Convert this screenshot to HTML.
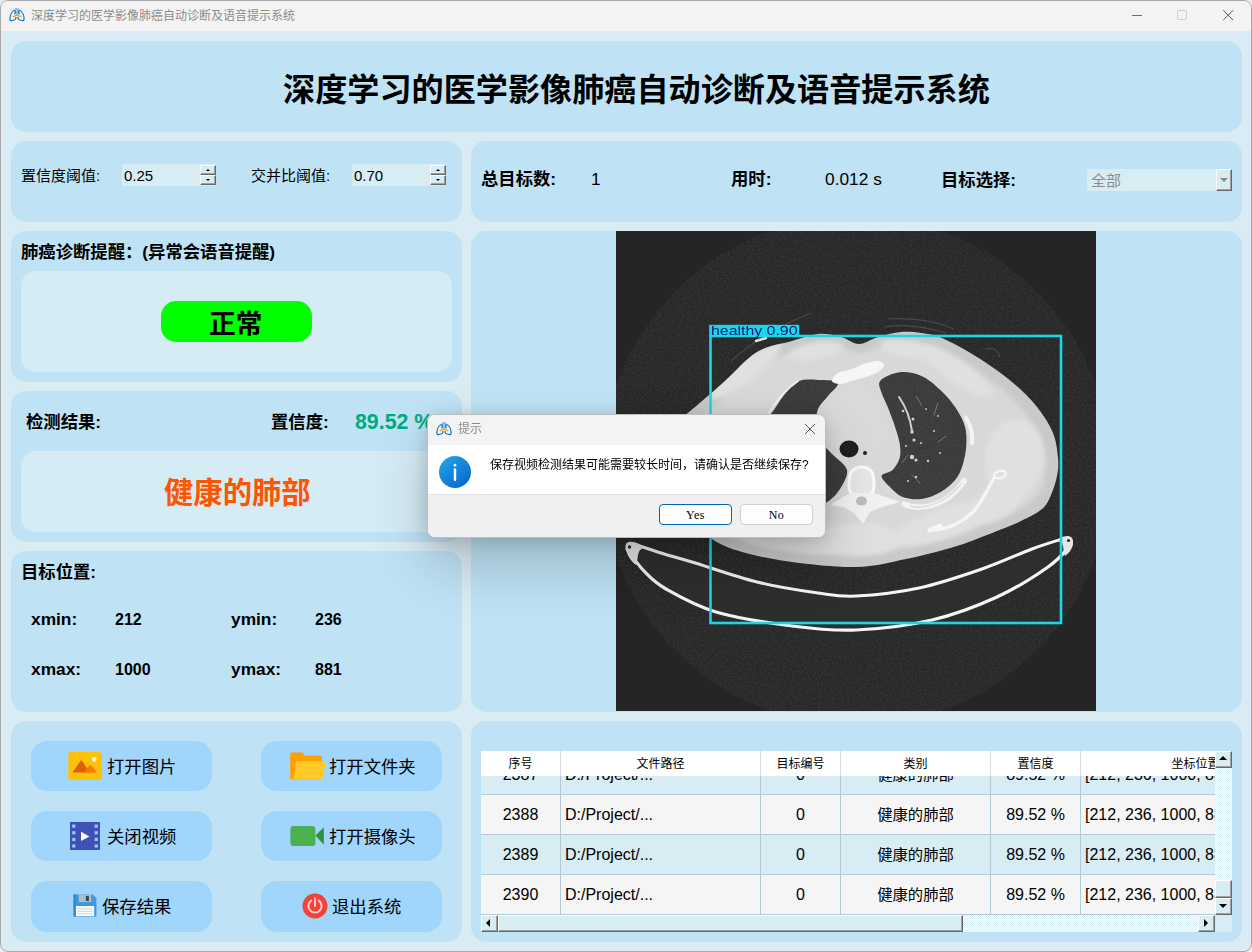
<!DOCTYPE html>
<html lang="zh-CN">
<head>
<meta charset="utf-8">
<title>深度学习的医学影像肺癌自动诊断及语音提示系统</title>
<style>
*{box-sizing:border-box;margin:0;padding:0}
html,body{width:1252px;height:952px;overflow:hidden;background:#ececec}
body{font-family:"Liberation Sans","Noto Sans CJK SC",sans-serif;color:#000;position:relative}
.abs{position:absolute}
#win{position:absolute;left:0;top:0;width:1252px;height:952px;background:#d9ecf4;border:1px solid #a9a9a9;border-radius:8px;overflow:hidden}
#tbar{position:absolute;left:0;top:0;width:1250px;height:30px;background:#f3f3f3}
#tbar .ttl{position:absolute;left:30px;top:0;height:30px;line-height:30px;font-size:12px;color:#8c8c8c;white-space:nowrap}
.panel{position:absolute;background:#bfe3f5;border-radius:15px}
.inner{position:absolute;background:#d6ecf5;border-radius:15px}
.t{position:absolute;white-space:nowrap;line-height:1}
.b{font-weight:bold}
.btn{position:absolute;background:#a0d5fc;border-radius:16px;width:181px;height:50px}
.bt{font-size:17.33px}

.spin{position:absolute;width:94px;height:22px;background:#d8ecf4}
.spin span{position:absolute;left:2px;top:4px;font-size:15px;line-height:1;white-space:nowrap}
.spin i{position:absolute;right:0;width:16px;height:10px;background:#d8ecf4;border-top:1px solid #fff;border-left:1px solid #fff;border-right:1px solid #696969;border-bottom:1px solid #696969;box-shadow:inset -1px -1px 0 #a0a0a0}
.spin i.up{top:1px}
.spin i.dn{top:11px}
.spin i:after{content:"";position:absolute;left:5px;width:0;height:0;border-left:2px solid transparent;border-right:2px solid transparent}
.spin i.up:after{top:3px;border-bottom:2px solid #000}
.spin i.dn:after{top:3px;border-top:2px solid #000}
.combo{position:absolute;width:145px;height:22px;background:#d8ecf4}
.combo span{position:absolute;left:4px;top:4px;font-size:15px;line-height:1;color:#8a8a8a;white-space:nowrap}
.combo i{position:absolute;right:0;top:0;width:16px;height:22px;background:#d8ecf4;border-top:1px solid #fff;border-left:1px solid #fff;border-right:1px solid #696969;border-bottom:1px solid #696969;box-shadow:inset -1px -1px 0 #a0a0a0}
.combo i:after{content:"";position:absolute;left:3px;top:8px;width:0;height:0;border-left:4px solid transparent;border-right:4px solid transparent;border-top:4px solid #8a8a8a}

.trow{position:absolute;left:0;width:840px;height:40px;border-bottom:1px solid #b4c9d3}
.tc.cj{font-size:15.33px}
.tc{position:absolute;top:0;height:39px;line-height:40px;font-size:16px;white-space:nowrap;overflow:hidden;border-right:1px solid #b4c9d3}
.th{position:absolute;top:0;height:25px;line-height:27px;font-size:12px;text-align:center;white-space:nowrap;border-right:1px solid #dcdcdc}
.sbtrack{background-color:#ecf6fa;background-image:repeating-conic-gradient(#fff 0% 25%, #d8ecf4 0% 50%);background-size:2px 2px}
.sbbtn{background:#d8ecf4;border-top:1px solid #fff;border-left:1px solid #fff;border-right:1px solid #696969;border-bottom:1px solid #696969;box-shadow:inset -1px -1px 0 #a0a0a0}
.sbbtn i{position:absolute;width:0;height:0}
.sbbtn i.au{left:3px;top:4px;border-left:4px solid transparent;border-right:4px solid transparent;border-bottom:4px solid #000}
.sbbtn i.ad{left:3px;top:5px;border-left:4px solid transparent;border-right:4px solid transparent;border-top:4px solid #000}
.sbbtn i.al{left:4px;top:3px;border-top:4px solid transparent;border-bottom:4px solid transparent;border-right:4px solid #000}
.sbbtn i.ar{left:5px;top:3px;border-top:4px solid transparent;border-bottom:4px solid transparent;border-left:4px solid #000}

.dbtn{position:absolute;width:73px;height:21px;border:1px solid #d0d0d0;border-radius:4px;background:#fdfdfd;font-family:"Liberation Serif","Noto Serif CJK SC",serif;font-size:12px;letter-spacing:0.5px;line-height:21px;text-align:center;color:#000}
</style>
</head>
<body>
<div id="win">
  <div id="tbar">
    <div class="ttl">深度学习的医学影像肺癌自动诊断及语音提示系统</div>
    <svg class="abs" style="left:8px;top:6.5px" width="16" height="16" viewBox="0 0 16 16">
      <g transform="scale(1,0.95)"><rect x="6.1" y="0.3" width="3.8" height="6.6" rx="0.6" fill="#6db3e3"/>
      <rect x="7.3" y="0.3" width="1.4" height="6.6" fill="#9ccbec"/>
      <path d="M5.2 2.6C3 3.4 1 7.2 0.9 11.6c0 1.6 0.9 1.9 2.2 1.6l2.6-0.8c0.9-0.3 1.2-0.8 1.2-1.8V9.8M5.2 2.6c1.1 0.5 1.5 2.2 0.5 3.3M10.8 2.6c2.2 0.8 4.2 4.6 4.3 9 0 1.6-0.9 1.9-2.2 1.6l-2.6-0.8c-0.9-0.3-1.2-0.8-1.2-1.8V9.8M10.8 2.6c-1.1 0.5-1.5 2.2-0.5 3.3" fill="none" stroke="#0b78c9" stroke-width="1.25" stroke-linecap="round" stroke-linejoin="round"/>
      <path d="M4.3 9.1C5.6 8.6 6.8 7.6 8 7.6s2.4 1 3.7 1.5" fill="none" stroke="#ff9a14" stroke-width="1.4" stroke-linecap="round"/></g>
    </svg>
    <svg class="abs" style="left:1120px;top:0" width="130" height="30" viewBox="0 0 130 30">
      <path d="M11 14.5h10" stroke="#6e6e6e" stroke-width="1" fill="none"/>
      <rect x="56.5" y="9.5" width="9" height="9" rx="1.2" fill="none" stroke="#cfcfcf" stroke-width="1"/>
      <path d="M102.2 9.2l10 10M112.2 9.2l-10 10" stroke="#5a5a5a" stroke-width="1" fill="none"/>
    </svg>
  </div>

  <!-- title panel -->
  <div class="panel" style="left:10px;top:40px;width:1231px;height:91px"></div>
  <div class="t b" id="maintitle" style="left:282px;top:72.5px;font-size:32.13px">深度学习的医学影像肺癌自动诊断及语音提示系统</div>

  <!-- threshold panel -->
  <div class="panel" style="left:10px;top:140px;width:451px;height:81px"></div>
  <!-- stats panel -->
  <div class="panel" style="left:470px;top:140px;width:771px;height:81px"></div>
  <!-- diagnosis panel -->
  <div class="panel" style="left:10px;top:230px;width:451px;height:151px"></div>
  <!-- result panel -->
  <div class="panel" style="left:10px;top:390px;width:451px;height:151px"></div>
  <!-- position panel -->
  <div class="panel" style="left:10px;top:550px;width:451px;height:161px"></div>
  <!-- buttons panel -->
  <div class="panel" style="left:10px;top:720px;width:451px;height:221px"></div>

  <!-- threshold contents -->
  <div class="t" style="left:20px;top:167px;font-size:15px">置信度阈值:</div>
  <div class="spin" style="left:121px;top:163px"><span>0.25</span><i class="up"></i><i class="dn"></i></div>
  <div class="t" style="left:250px;top:167px;font-size:15px">交并比阈值:</div>
  <div class="spin" style="left:351px;top:163px"><span>0.70</span><i class="up"></i><i class="dn"></i></div>

  <!-- stats contents -->
  <div class="t b" style="left:480px;top:170px;font-size:17.33px">总目标数:</div>
  <div class="t" style="left:590px;top:170px;font-size:17.33px">1</div>
  <div class="t b" style="left:730px;top:170px;font-size:17.33px">用时:</div>
  <div class="t" style="left:824px;top:170px;font-size:17.33px">0.012 s</div>
  <div class="t b" style="left:940px;top:171px;font-size:17.33px">目标选择:</div>
  <div class="combo" style="left:1086px;top:168px"><span>全部</span><i></i></div>

  <!-- diagnosis contents -->
  <div class="t b" style="left:20px;top:243px;font-size:17.33px">肺癌诊断提醒：(异常会语音提醒)</div>
  <div class="inner" style="left:20px;top:270px;width:431px;height:101px"></div>
  <div class="abs" style="left:160px;top:300px;width:151px;height:41px;background:#00ff00;border-radius:15px"></div>
  <div class="t b" style="left:208px;top:310px;font-size:26.67px">正常</div>

  <!-- result contents -->
  <div class="t b" style="left:25px;top:413px;font-size:17.33px">检测结果:</div>
  <div class="t b" style="left:270px;top:413px;font-size:17.33px">置信度:</div>
  <div class="t b" style="left:354px;top:411px;font-size:21.33px;color:#00aa7f">89.52 %</div>
  <div class="inner" style="left:20px;top:450px;width:431px;height:81px"></div>
  <div class="t b" style="left:163px;top:477px;font-size:29.33px;color:#ff5500">健康的肺部</div>

  <!-- position contents -->
  <div class="t b" style="left:20px;top:563px;font-size:17.33px">目标位置:</div>
  <div class="t b" style="left:30px;top:610px;font-size:17.33px">xmin:</div>
  <div class="t b" style="left:114px;top:611px;font-size:16px">212</div>
  <div class="t b" style="left:230px;top:610px;font-size:17.33px">ymin:</div>
  <div class="t b" style="left:314px;top:611px;font-size:16px">236</div>
  <div class="t b" style="left:30px;top:660px;font-size:17.33px">xmax:</div>
  <div class="t b" style="left:114px;top:661px;font-size:16px">1000</div>
  <div class="t b" style="left:230px;top:660px;font-size:17.33px">ymax:</div>
  <div class="t b" style="left:314px;top:661px;font-size:16px">881</div>

  <!-- buttons -->
  <div class="btn" style="left:30px;top:740px"></div>
  <div class="btn" style="left:260px;top:740px"></div>
  <div class="btn" style="left:30px;top:810px"></div>
  <div class="btn" style="left:260px;top:810px"></div>
  <div class="btn" style="left:30px;top:880px;height:51px"></div>
  <div class="btn" style="left:260px;top:880px;height:51px"></div>
  <div class="t bt" style="left:106px;top:758px">打开图片</div>
  <div class="t bt" style="left:328px;top:758px">打开文件夹</div>
  <div class="t bt" style="left:106px;top:828px">关闭视频</div>
  <div class="t bt" style="left:328px;top:828px">打开摄像头</div>
  <div class="t bt" style="left:101px;top:898px">保存结果</div>
  <div class="t bt" style="left:331px;top:898px">退出系统</div>
  <!-- image icon -->
  <svg class="abs" style="left:67px;top:751px" width="34" height="29" viewBox="0 0 34 29">
    <rect x="0.3" y="0" width="33.4" height="28" rx="2.8" fill="#ffc107"/>
    <path d="M4.4 20.6L13.2 7.9L22 20.6Z" fill="#dd5f0a"/>
    <path d="M15.6 20.6L22.2 12.6L29 20.6Z" fill="#f57c00"/>
    <circle cx="26.2" cy="7.4" r="2.3" fill="#fff8e1"/>
  </svg>
  <!-- folder icon -->
  <svg class="abs" style="left:289px;top:751px" width="37" height="29" viewBox="0 0 37 29">
    <path d="M2.2 0.5h9.3c1 0 1.6 0.4 2.1 1.3l1 1.9h15.4c1.2 0 2 0.8 2 2v19.8c0 1.2-0.8 2-2 2H2.2c-1.2 0-2-0.8-2-2V2.5c0-1.2 0.8-2 2-2z" fill="#ffa000"/>
    <path d="M8 9.1h25.6c1.4 0 2.1 0.9 1.9 2.2l-2.6 14.2c-0.2 1.3-1 2-2.3 2H5.4c-1.3 0-2-0.8-1.8-2.1l2.4-14.3c0.2-1.3 0.8-2 2-2z" fill="#ffca28"/>
  </svg>
  <!-- video icon -->
  <svg class="abs" style="left:69px;top:821px" width="30" height="29" viewBox="0 0 30 29">
    <rect x="0" y="0" width="30" height="28" fill="#3f51b5"/>
    <g fill="#9fc5f4"><rect x="2.2" y="2.5" width="3.2" height="3.2"/><rect x="2.2" y="9.2" width="3.2" height="3.2"/><rect x="2.2" y="15.8" width="3.2" height="3.2"/><rect x="2.2" y="22.4" width="3.2" height="3.2"/><rect x="24.6" y="2.5" width="3.2" height="3.2"/><rect x="24.6" y="9.2" width="3.2" height="3.2"/><rect x="24.6" y="15.8" width="3.2" height="3.2"/><rect x="24.6" y="22.4" width="3.2" height="3.2"/></g>
    <path d="M11 9.8L19.4 14.4L11 19Z" fill="#fff"/>
  </svg>
  <!-- camera icon -->
  <svg class="abs" style="left:289px;top:825px" width="36" height="21" viewBox="0 0 36 21">
    <rect x="0.4" y="0" width="25" height="20" rx="3" fill="#4caf50"/>
    <path d="M25.4 9.5L33.8 1.2V18.8Z" fill="#388e3c"/>
  </svg>
  <!-- save icon -->
  <svg class="abs" style="left:72px;top:893px" width="24" height="24" viewBox="0 0 24 24">
    <path d="M0.6 0.6h19.2l3.6 3.6v18.2h-22.8z" fill="#3d9ae0"/>
    <path d="M0.6 0.6h2.2v21.8h-2.2z" fill="#2f86cd"/>
    <rect x="5.9" y="0.6" width="12.3" height="7.4" fill="#b0bec5"/>
    <rect x="12.9" y="1.9" width="3" height="5" fill="#37474f"/>
    <rect x="2.9" y="12" width="18.3" height="10" fill="#fafafa"/>
    <path d="M4.6 14.8h14.8M4.6 17.3h14.8M4.6 19.8h14.8" stroke="#cfd8dc" stroke-width="1"/>
  </svg>
  <!-- power icon -->
  <svg class="abs" style="left:301px;top:892px" width="26" height="26" viewBox="0 0 26 26">
    <circle cx="13" cy="13" r="12.5" fill="#f44336"/>
    <path d="M9.2 7.6A6.6 6.6 0 1 0 16.8 7.6" fill="none" stroke="#ffcdd2" stroke-width="2" stroke-linecap="round"/>
    <path d="M13 5.2V13" stroke="#ffcdd2" stroke-width="2" stroke-linecap="round"/>
  </svg>

  <!-- image panel -->
  <div class="panel" style="left:470px;top:230px;width:771px;height:481px"></div>
  <div class="abs" style="left:615px;top:230px;width:480px;height:480px;background:#252525;overflow:hidden">
<svg class="abs" style="left:0;top:0" width="480" height="480" viewBox="0 0 480 480">
<defs>
<filter id="nz" x="0" y="0" width="100%" height="100%"><feTurbulence type="fractalNoise" baseFrequency="0.55" numOctaves="2" seed="3" result="n"/><feColorMatrix in="n" type="matrix" values="0 0 0 0 1  0 0 0 0 1  0 0 0 0 1  0.9 0 0 0 -0.38" result="w"/><feComposite in="w" in2="SourceGraphic" operator="in"/></filter>
<filter id="nz2" x="0" y="0" width="100%" height="100%"><feTurbulence type="fractalNoise" baseFrequency="0.35 0.5" numOctaves="2" seed="11" result="n"/><feColorMatrix in="n" type="matrix" values="0 0 0 0 0  0 0 0 0 0  0 0 0 0 0  0 1.4 0 0 -0.45" result="w"/><feComposite in="w" in2="SourceGraphic" operator="in"/></filter>
<filter id="b1"><feGaussianBlur stdDeviation="0.7"/></filter>
<filter id="b2"><feGaussianBlur stdDeviation="2.5"/></filter>
<filter id="b4"><feGaussianBlur stdDeviation="5"/></filter>
<clipPath id="bodyclip"><path d="M243.0 113.0C249.2 113.0 255.0 108.0 262.0 106.0C269.0 104.0 277.8 101.7 285.0 101.0C292.2 100.3 298.2 101.0 305.0 102.0C311.8 103.0 316.7 103.0 326.0 107.0C335.3 111.0 349.3 118.7 361.0 126.0C372.7 133.3 386.0 142.7 396.0 151.0C406.0 159.3 414.2 167.5 421.0 176.0C427.8 184.5 433.5 193.5 437.0 202.0C440.5 210.5 441.3 219.8 442.0 227.0C442.7 234.2 442.2 238.8 441.0 245.0C439.8 251.2 437.5 258.5 435.0 264.0C432.5 269.5 431.0 273.7 426.0 278.0C421.0 282.3 412.5 286.3 405.0 290.0C397.5 293.7 391.7 295.8 381.0 300.0C370.3 304.2 356.2 310.3 341.0 315.0C325.8 319.7 306.8 324.5 290.0 328.0C273.2 331.5 259.0 335.5 240.0 336.0C221.0 336.5 195.0 333.5 176.0 331.0C157.0 328.5 139.3 324.8 126.0 321.0C112.7 317.2 105.3 314.0 96.0 308.0C86.7 302.0 77.3 294.7 70.0 285.0C62.7 275.3 55.8 261.7 52.0 250.0C48.2 238.3 46.3 224.3 47.0 215.0C47.7 205.7 51.7 199.7 56.0 194.0C60.3 188.3 64.3 188.2 73.0 181.0C81.7 173.8 96.7 161.0 108.0 151.0C119.3 141.0 129.7 127.8 141.0 121.0C152.3 114.2 165.8 113.0 176.0 110.0C186.2 107.0 193.8 103.7 202.0 103.0C210.2 102.3 218.2 104.3 225.0 106.0C231.8 107.7 236.8 113.0 243.0 113.0Z"/></clipPath>
</defs>
<rect width="480" height="480" fill="#252525"/>
<circle cx="240" cy="240" r="255" fill="#2c2c2c"/>
<circle cx="240" cy="240" r="255" fill="#fff" filter="url(#nz)" opacity="0.16"/>
<circle cx="240" cy="240" r="255" fill="#000" filter="url(#nz2)" opacity="0.22"/>
<path d="M11.0 318.0C13.8 321.7 21.5 333.3 28.0 340.0C34.5 346.7 38.0 351.2 50.0 358.0C62.0 364.8 79.0 374.8 100.0 381.0C121.0 387.2 152.7 392.0 176.0 395.0C199.3 398.0 216.7 400.0 240.0 399.0C263.3 398.0 292.5 394.5 316.0 389.0C339.5 383.5 361.7 374.8 381.0 366.0C400.3 357.2 419.7 344.7 432.0 336.0C444.3 327.3 451.2 317.7 455.0 314.0L446.0 308.0C441.0 309.7 429.3 313.0 416.0 318.0C402.7 323.0 384.8 331.5 366.0 338.0C347.2 344.5 324.0 352.5 303.0 357.0C282.0 361.5 256.8 364.2 240.0 365.0C223.2 365.8 218.5 364.3 202.0 362.0C185.5 359.7 162.0 356.2 141.0 351.0C120.0 345.8 92.0 335.8 76.0 331.0C60.0 326.2 54.7 325.0 45.0 322.0C35.3 319.0 22.5 314.5 18.0 313.0Z" fill="#2e2e2e"/>
<g filter="url(#b1)">
<path d="M11.0 318.0C13.8 321.7 21.5 333.3 28.0 340.0C34.5 346.7 38.0 351.2 50.0 358.0C62.0 364.8 79.0 374.8 100.0 381.0C121.0 387.2 152.7 392.0 176.0 395.0C199.3 398.0 216.7 400.0 240.0 399.0C263.3 398.0 292.5 394.5 316.0 389.0C339.5 383.5 361.7 374.8 381.0 366.0C400.3 357.2 419.7 344.7 432.0 336.0C444.3 327.3 451.2 317.7 455.0 314.0" fill="none" stroke="#f4f4f4" stroke-width="3.2" stroke-linecap="round"/>
<path d="M18.0 313.0C22.5 314.5 35.3 319.0 45.0 322.0C54.7 325.0 60.0 326.2 76.0 331.0C92.0 335.8 120.0 345.8 141.0 351.0C162.0 356.2 185.5 359.7 202.0 362.0C218.5 364.3 223.2 365.8 240.0 365.0C256.8 364.2 282.0 361.5 303.0 357.0C324.0 352.5 347.2 344.5 366.0 338.0C384.8 331.5 402.7 323.0 416.0 318.0C429.3 313.0 441.0 309.7 446.0 308.0" fill="none" stroke="#f4f4f4" stroke-width="3" stroke-linecap="round"/>
<path d="M9.5 316C9 310 16 309 24 313.5C27 315 27 318 24 319C21 323 22 330 20 334C15 330 10.5 324 9.5 316Z" fill="#e6e6e6"/>
<circle cx="13.5" cy="316" r="1.7" fill="#2a2a2a"/>
<path d="M457 312C458 305 451 303 444 307.5C441.5 309.5 443 311.5 446 312C448 316 447 321 449 325C453 322 456.5 318 457 312Z" fill="#e6e6e6"/>
<circle cx="452.5" cy="309.5" r="1.6" fill="#2a2a2a"/>
</g>
<g filter="url(#b1)">
<path d="M243.0 113.0C249.2 113.0 255.0 108.0 262.0 106.0C269.0 104.0 277.8 101.7 285.0 101.0C292.2 100.3 298.2 101.0 305.0 102.0C311.8 103.0 316.7 103.0 326.0 107.0C335.3 111.0 349.3 118.7 361.0 126.0C372.7 133.3 386.0 142.7 396.0 151.0C406.0 159.3 414.2 167.5 421.0 176.0C427.8 184.5 433.5 193.5 437.0 202.0C440.5 210.5 441.3 219.8 442.0 227.0C442.7 234.2 442.2 238.8 441.0 245.0C439.8 251.2 437.5 258.5 435.0 264.0C432.5 269.5 431.0 273.7 426.0 278.0C421.0 282.3 412.5 286.3 405.0 290.0C397.5 293.7 391.7 295.8 381.0 300.0C370.3 304.2 356.2 310.3 341.0 315.0C325.8 319.7 306.8 324.5 290.0 328.0C273.2 331.5 259.0 335.5 240.0 336.0C221.0 336.5 195.0 333.5 176.0 331.0C157.0 328.5 139.3 324.8 126.0 321.0C112.7 317.2 105.3 314.0 96.0 308.0C86.7 302.0 77.3 294.7 70.0 285.0C62.7 275.3 55.8 261.7 52.0 250.0C48.2 238.3 46.3 224.3 47.0 215.0C47.7 205.7 51.7 199.7 56.0 194.0C60.3 188.3 64.3 188.2 73.0 181.0C81.7 173.8 96.7 161.0 108.0 151.0C119.3 141.0 129.7 127.8 141.0 121.0C152.3 114.2 165.8 113.0 176.0 110.0C186.2 107.0 193.8 103.7 202.0 103.0C210.2 102.3 218.2 104.3 225.0 106.0C231.8 107.7 236.8 113.0 243.0 113.0Z" fill="#c9c9c9"/>
</g>
<g clip-path="url(#bodyclip)">
<path d="M243.0 122.0C249.0 121.8 255.0 117.7 262.0 116.0C269.0 114.3 277.8 112.5 285.0 112.0C292.2 111.5 298.5 112.0 305.0 113.0C311.5 114.0 315.7 114.2 324.0 118.0C332.3 121.8 344.3 129.0 355.0 136.0C365.7 143.0 378.8 152.2 388.0 160.0C397.2 167.8 404.0 175.3 410.0 183.0C416.0 190.7 420.7 198.7 424.0 206.0C427.3 213.3 429.2 220.5 430.0 227.0C430.8 233.5 430.0 239.5 429.0 245.0C428.0 250.5 426.5 255.7 424.0 260.0C421.5 264.3 418.8 267.3 414.0 271.0C409.2 274.7 402.0 278.7 395.0 282.0C388.0 285.3 382.0 287.2 372.0 291.0C362.0 294.8 349.0 300.7 335.0 305.0C321.0 309.3 303.8 313.8 288.0 317.0C272.2 320.2 258.0 323.5 240.0 324.0C222.0 324.5 198.0 322.3 180.0 320.0C162.0 317.7 144.7 313.7 132.0 310.0C119.3 306.3 112.3 303.3 104.0 298.0C95.7 292.7 88.3 286.3 82.0 278.0C75.7 269.7 69.7 258.5 66.0 248.0C62.3 237.5 59.7 223.2 60.0 215.0C60.3 206.8 64.0 203.7 68.0 199.0C72.0 194.3 76.0 193.5 84.0 187.0C92.0 180.5 105.5 169.2 116.0 160.0C126.5 150.8 136.7 138.5 147.0 132.0C157.3 125.5 168.7 124.0 178.0 121.0C187.3 118.0 195.0 114.7 203.0 114.0C211.0 113.3 219.3 115.7 226.0 117.0C232.7 118.3 237.0 122.2 243.0 122.0Z" fill="#d8d8d8" filter="url(#b2)"/>
<g filter="url(#b2)" fill="#e0e0e0">
<ellipse cx="398" cy="228" rx="29" ry="40" transform="rotate(8 398 228)"/>
<ellipse cx="380" cy="272" rx="30" ry="16" transform="rotate(-30 380 272)"/>
<ellipse cx="240" cy="200" rx="30" ry="45" fill="#d9d9d9"/>
<ellipse cx="330" cy="292" rx="55" ry="15" transform="rotate(-18 330 292)"/>
<ellipse cx="180" cy="305" rx="70" ry="16" transform="rotate(6 180 305)"/>
<ellipse cx="245" cy="308" rx="40" ry="16"/>
<ellipse cx="130" cy="140" rx="44" ry="10" transform="rotate(-38 130 140)"/>
<ellipse cx="340" cy="140" rx="44" ry="11" transform="rotate(34 340 140)"/>
<ellipse cx="200" cy="120" rx="28" ry="8" transform="rotate(-10 200 120)"/>
<ellipse cx="292" cy="118" rx="28" ry="8" transform="rotate(10 292 118)"/>
</g>
<g filter="url(#b1)">
<path d="M264.4 149.7C267.4 146.3 276.8 142.1 283.7 141.3C290.6 140.5 298.6 142.0 305.5 145.0C312.4 148.0 319.2 154.2 324.8 159.4C330.4 164.6 335.3 170.2 339.3 176.3C343.3 182.4 347.2 189.2 349.0 195.7C350.8 202.1 350.6 208.6 350.2 215.0C349.8 221.4 348.4 228.7 346.6 234.3C344.8 239.9 342.9 244.4 339.3 248.8C335.7 253.2 330.4 257.8 324.8 261.0C319.2 264.2 312.0 267.2 305.5 268.0C299.0 268.8 291.2 267.7 286.0 265.7C280.8 263.7 277.4 259.4 274.0 256.0C270.6 252.6 265.2 247.8 265.6 245.0C266.0 242.2 273.5 242.0 276.5 239.0C279.5 236.0 282.5 231.4 283.7 227.0C284.9 222.6 284.5 217.8 283.7 212.6C282.9 207.4 281.0 201.8 279.0 195.7C277.0 189.6 273.9 181.7 271.7 176.0C269.5 170.3 266.8 166.2 265.6 161.8C264.4 157.4 261.4 153.1 264.4 149.7Z" fill="#3a3a3a"/>
<path d="M154.0 184.0C159.5 178.0 163.2 169.7 168.0 164.0C172.8 158.3 176.8 152.5 183.0 150.0C189.2 147.5 198.5 148.7 205.0 149.0C211.5 149.3 220.8 149.3 222.0 152.0C223.2 154.7 215.3 160.7 212.0 165.0C208.7 169.3 204.0 173.0 202.0 178.0C200.0 183.0 199.5 189.7 200.0 195.0C200.5 200.3 202.5 205.5 205.0 210.0C207.5 214.5 211.2 218.0 215.0 222.0C218.8 226.0 225.3 230.5 228.0 234.0C230.7 237.5 231.7 239.0 231.0 243.0C230.3 247.0 226.8 253.7 224.0 258.0C221.2 262.3 218.3 266.0 214.0 269.0C209.7 272.0 205.3 275.5 198.0 276.0C190.7 276.5 179.7 273.0 170.0 272.0C160.3 271.0 148.7 273.7 140.0 270.0C131.3 266.3 121.3 258.3 118.0 250.0C114.7 241.7 117.2 228.3 120.0 220.0C122.8 211.7 129.3 206.0 135.0 200.0C140.7 194.0 148.5 190.0 154.0 184.0Z" fill="#3a3a3a"/>
</g>
<g filter="url(#b1)" stroke="#cfcfcf" fill="#cfcfcf" stroke-linecap="round">
<path d="M283 166C290 176 294 186 296 200" fill="none" stroke-width="2"/>
<circle cx="287" cy="180" r="1.3" stroke="none"/>
<circle cx="297" cy="188" r="1.5" stroke="none"/>
<circle cx="296" cy="201" r="1.8" stroke="none"/>
<circle cx="298" cy="209" r="1.6" stroke="none"/>
<circle cx="296" cy="226" r="2.2" stroke="none"/>
<circle cx="300" cy="229" r="1.6" stroke="none"/>
<circle cx="312" cy="230" r="1.2" stroke="none"/>
<circle cx="305" cy="212" r="1" stroke="none"/>
<circle cx="318" cy="200" r="1" stroke="none"/>
<circle cx="324" cy="222" r="1" stroke="none"/>
<circle cx="290" cy="215" r="1" stroke="none"/>
<circle cx="310" cy="178" r="0.9" stroke="none"/>
<circle cx="322" cy="185" r="0.9" stroke="none"/>
<circle cx="300" cy="246" r="1.2" stroke="none"/>
<circle cx="292" cy="250" r="1" stroke="none"/>
<path d="M300 165l6 10M322 172l-4 12M330 205l-8 6M286 232l6 -8M296 244l8 8" fill="none" stroke="#777" stroke-width="1"/>
</g>
<g filter="url(#b1)">
<path d="M216.0 150.0C215.7 148.2 218.7 144.0 222.0 142.0C225.3 140.0 231.7 139.5 236.0 138.0C240.3 136.5 243.7 134.3 248.0 133.0C252.3 131.7 258.7 129.8 262.0 130.0C265.3 130.2 268.0 132.2 268.0 134.0C268.0 135.8 265.0 139.0 262.0 141.0C259.0 143.0 254.3 144.5 250.0 146.0C245.7 147.5 240.3 148.8 236.0 150.0C231.7 151.2 227.3 153.0 224.0 153.0C220.7 153.0 216.3 151.8 216.0 150.0Z" fill="#f6f6f6"/>
<path d="M233.0 251.0C233.2 247.3 233.9 242.5 236.0 240.0C238.1 237.5 242.4 236.0 245.6 236.0C248.8 236.0 252.9 237.5 255.0 240.0C257.1 242.5 257.8 247.3 258.0 251.0C258.2 254.7 258.1 259.3 256.0 262.0C253.9 264.7 249.1 267.0 245.6 267.0C242.1 267.0 237.1 264.7 235.0 262.0C232.9 259.3 232.8 254.7 233.0 251.0Z" fill="#e6e6e6" stroke="#fafafa" stroke-width="3"/>
<path d="M234 262L214 274L228 276L238 282L247 293L254 281L266 276L284 271L258 262Z" fill="#f2f2f2"/>
<ellipse cx="245.5" cy="270" rx="5.5" ry="4.5" fill="#bdbdbd"/>
<path d="M350 187C355 195 357 204 356 212" fill="none" stroke="#f4f4f4" stroke-width="4" stroke-linecap="round"/>
<path d="M288 273C306 281 332 274 348 250" fill="none" stroke="#f3f3f3" stroke-width="5.5" stroke-linecap="round"/>
<path d="M294 275C308 279 330 272 345 253" fill="none" stroke="#dcdcdc" stroke-width="1.6" stroke-linecap="round"/>
<path d="M314 299C330 299 346 292 359 279C368 268 373 255 378 247" fill="none" stroke="#f6f6f6" stroke-width="3.2" stroke-linecap="round"/>
<path d="M314 299l10 -4" fill="none" stroke="#f6f6f6" stroke-width="5" stroke-linecap="round"/>
<ellipse cx="384" cy="243.5" rx="6" ry="3.6" fill="none" stroke="#f6f6f6" stroke-width="2.4" transform="rotate(-15 384 243.5)"/>
<path d="M150 186C160 170 170 158 182 150" fill="none" stroke="#efefef" stroke-width="2" stroke-linecap="round"/>
</g>
<g filter="url(#b1)"><ellipse cx="233" cy="218" rx="9.5" ry="8.5" fill="#1e1e1e"/><circle cx="249" cy="222" r="2" fill="#222"/></g>
<path d="M243.0 113.0C249.2 113.0 255.0 108.0 262.0 106.0C269.0 104.0 277.8 101.7 285.0 101.0C292.2 100.3 298.2 101.0 305.0 102.0C311.8 103.0 316.7 103.0 326.0 107.0C335.3 111.0 349.3 118.7 361.0 126.0C372.7 133.3 386.0 142.7 396.0 151.0C406.0 159.3 414.2 167.5 421.0 176.0C427.8 184.5 433.5 193.5 437.0 202.0C440.5 210.5 441.3 219.8 442.0 227.0C442.7 234.2 442.2 238.8 441.0 245.0C439.8 251.2 437.5 258.5 435.0 264.0C432.5 269.5 431.0 273.7 426.0 278.0C421.0 282.3 412.5 286.3 405.0 290.0C397.5 293.7 391.7 295.8 381.0 300.0C370.3 304.2 356.2 310.3 341.0 315.0C325.8 319.7 306.8 324.5 290.0 328.0C273.2 331.5 259.0 335.5 240.0 336.0C221.0 336.5 195.0 333.5 176.0 331.0C157.0 328.5 139.3 324.8 126.0 321.0C112.7 317.2 105.3 314.0 96.0 308.0C86.7 302.0 77.3 294.7 70.0 285.0C62.7 275.3 55.8 261.7 52.0 250.0C48.2 238.3 46.3 224.3 47.0 215.0C47.7 205.7 51.7 199.7 56.0 194.0C60.3 188.3 64.3 188.2 73.0 181.0C81.7 173.8 96.7 161.0 108.0 151.0C119.3 141.0 129.7 127.8 141.0 121.0C152.3 114.2 165.8 113.0 176.0 110.0C186.2 107.0 193.8 103.7 202.0 103.0C210.2 102.3 218.2 104.3 225.0 106.0C231.8 107.7 236.8 113.0 243.0 113.0Z" fill="#000" filter="url(#nz)" opacity="0.16"/>
</g>
<g stroke="#4a4a4a" stroke-width="1.2" fill="none" filter="url(#b1)"><path d="M115 130C140 108 170 92 195 82M272 88C300 86 320 90 338 98M268 96C290 92 310 96 330 102M370 118C378 116 382 120 384 126"/></g>
<path d="M140 110l10 -3" stroke="#e0e0e0" stroke-width="2.5" stroke-linecap="round"/>
<rect x="94.5" y="105" width="350.5" height="287" fill="none" stroke="#1cd6e8" stroke-width="2.6"/>
<rect x="93.2" y="93.8" width="90" height="11.5" fill="#1cd6e8"/>
<text x="95" y="104" font-family="Liberation Sans, sans-serif" font-size="13.5" fill="#15157c" textLength="86.5" lengthAdjust="spacingAndGlyphs">healthy 0.90</text>
</svg>
  </div>
  <!-- table panel -->
  <div class="panel" style="left:470px;top:720px;width:771px;height:221px"></div>
  <div id="tbl" class="abs" style="left:480px;top:750px;width:751px;height:181px;background:#d8ecf4;overflow:hidden">
   <div class="abs" id="tview" style="left:0;top:0;width:734px;height:164px;overflow:hidden">
    <div class="trow" style="top:4px;background:#d8ecf4">
     <div class="tc" style="left:0px;width:80px;text-align:center;">2387</div>
     <div class="tc" style="left:80px;width:200px;text-align:left;padding-left:4px;">D:/Project/...</div>
     <div class="tc" style="left:280px;width:80px;text-align:center;">0</div>
     <div class="tc cj" style="left:360px;width:150px;text-align:center;">健康的肺部</div>
     <div class="tc" style="left:510px;width:90px;text-align:center;">89.52 %</div>
     <div class="tc" style="left:600px;width:230px;text-align:left;padding-left:4px;">[212, 236, 1000, 881]</div>
    </div>
    <div class="trow" style="top:44px;background:#f5f5f5">
     <div class="tc" style="left:0px;width:80px;text-align:center;">2388</div>
     <div class="tc" style="left:80px;width:200px;text-align:left;padding-left:4px;">D:/Project/...</div>
     <div class="tc" style="left:280px;width:80px;text-align:center;">0</div>
     <div class="tc cj" style="left:360px;width:150px;text-align:center;">健康的肺部</div>
     <div class="tc" style="left:510px;width:90px;text-align:center;">89.52 %</div>
     <div class="tc" style="left:600px;width:230px;text-align:left;padding-left:4px;">[212, 236, 1000, 881]</div>
    </div>
    <div class="trow" style="top:84px;background:#d8ecf4">
     <div class="tc" style="left:0px;width:80px;text-align:center;">2389</div>
     <div class="tc" style="left:80px;width:200px;text-align:left;padding-left:4px;">D:/Project/...</div>
     <div class="tc" style="left:280px;width:80px;text-align:center;">0</div>
     <div class="tc cj" style="left:360px;width:150px;text-align:center;">健康的肺部</div>
     <div class="tc" style="left:510px;width:90px;text-align:center;">89.52 %</div>
     <div class="tc" style="left:600px;width:230px;text-align:left;padding-left:4px;">[212, 236, 1000, 881]</div>
    </div>
    <div class="trow" style="top:124px;background:#f5f5f5">
     <div class="tc" style="left:0px;width:80px;text-align:center;">2390</div>
     <div class="tc" style="left:80px;width:200px;text-align:left;padding-left:4px;">D:/Project/...</div>
     <div class="tc" style="left:280px;width:80px;text-align:center;">0</div>
     <div class="tc cj" style="left:360px;width:150px;text-align:center;">健康的肺部</div>
     <div class="tc" style="left:510px;width:90px;text-align:center;">89.52 %</div>
     <div class="tc" style="left:600px;width:230px;text-align:left;padding-left:4px;">[212, 236, 1000, 881]</div>
    </div>
    <div class="abs" style="left:0;top:0;width:734px;height:25px;background:#fff">
     <div class="th" style="left:0px;width:80px">序号</div>
     <div class="th" style="left:80px;width:200px">文件路径</div>
     <div class="th" style="left:280px;width:80px">目标编号</div>
     <div class="th" style="left:360px;width:150px">类别</div>
     <div class="th" style="left:510px;width:90px">置信度</div>
     <div class="th" style="left:600px;width:230px">坐标位置</div>
    </div>
   </div>
   <div class="sbtrack abs" style="left:734px;top:0;width:17px;height:164px"></div>
   <div class="sbbtn abs" style="left:734px;top:0;width:17px;height:17px"><i class="au"></i></div>
   <div class="sbbtn abs" style="left:734px;top:129px;width:17px;height:18px"></div>
   <div class="sbbtn abs" style="left:734px;top:147px;width:17px;height:17px"><i class="ad"></i></div>
   <div class="sbtrack abs" style="left:0;top:164px;width:734px;height:17px"></div>
   <div class="sbbtn abs" style="left:0;top:164px;width:17px;height:17px"><i class="al"></i></div>
   <div class="sbbtn abs" style="left:17px;top:164px;width:465px;height:17px"></div>
   <div class="sbbtn abs" style="left:717px;top:164px;width:17px;height:17px"><i class="ar"></i></div>
  </div>

  <!-- dialog -->
  <div id="dlg" class="abs" style="left:426px;top:413px;width:399px;height:124px;border:1px solid #bdbdbd;border-radius:8px;background:#fff;overflow:hidden;box-shadow:0 28px 56px rgba(0,0,0,0.20),0 2px 20px rgba(0,0,0,0.16)">
    <div class="abs" style="left:0;top:0;width:397px;height:30px;background:#f3f3f3"></div>
    <svg class="abs" style="left:8px;top:6.5px" width="16" height="16" viewBox="0 0 16 16">
      <g transform="scale(1,0.95)"><rect x="6.1" y="0.3" width="3.8" height="6.6" rx="0.6" fill="#6db3e3"/>
      <rect x="7.3" y="0.3" width="1.4" height="6.6" fill="#9ccbec"/>
      <path d="M5.2 2.6C3 3.4 1 7.2 0.9 11.6c0 1.6 0.9 1.9 2.2 1.6l2.6-0.8c0.9-0.3 1.2-0.8 1.2-1.8V9.8M5.2 2.6c1.1 0.5 1.5 2.2 0.5 3.3M10.8 2.6c2.2 0.8 4.2 4.6 4.3 9 0 1.6-0.9 1.9-2.2 1.6l-2.6-0.8c-0.9-0.3-1.2-0.8-1.2-1.8V9.8M10.8 2.6c-1.1 0.5-1.5 2.2-0.5 3.3" fill="none" stroke="#0b78c9" stroke-width="1.25" stroke-linecap="round" stroke-linejoin="round"/>
      <path d="M4.3 9.1C5.6 8.6 6.8 7.6 8 7.6s2.4 1 3.7 1.5" fill="none" stroke="#ff9a14" stroke-width="1.4" stroke-linecap="round"/></g>
    </svg>
    <div class="t" style="left:30px;top:8px;font-size:12px;color:#8c8c8c">提示</div>
    <svg class="abs" style="left:376px;top:8px" width="12" height="12" viewBox="0 0 12 12"><path d="M1 1l10 10M11 1L1 11" stroke="#5a5a5a" stroke-width="1" fill="none"/></svg>
    <svg class="abs" style="left:10px;top:40px" width="34" height="34" viewBox="0 0 34 34">
      <defs><linearGradient id="ig" x1="0.15" y1="0.1" x2="0.85" y2="0.95"><stop offset="0" stop-color="#229fe6"/><stop offset="1" stop-color="#0868cf"/></linearGradient></defs>
      <circle cx="17" cy="17" r="16" fill="url(#ig)"/>
      <circle cx="17" cy="10.2" r="1.35" fill="#fff"/>
      <rect x="15.8" y="13.3" width="2.4" height="12.6" rx="1.2" fill="#fff"/>
    </svg>
    <div class="t" style="left:62px;top:44px;font-size:12px">保存视频检测结果可能需要较长时间，请确认是否继续保存?</div>
    <div class="abs" style="left:0;top:79px;width:397px;height:44px;background:#f0f0f0;border-top:1px solid #dfdfdf"></div>
    <div class="dbtn" style="left:231px;top:89px;border-color:#0067c0">Yes</div>
    <div class="dbtn" style="left:312px;top:89px">No</div>
  </div>
</div>
</body>
</html>
